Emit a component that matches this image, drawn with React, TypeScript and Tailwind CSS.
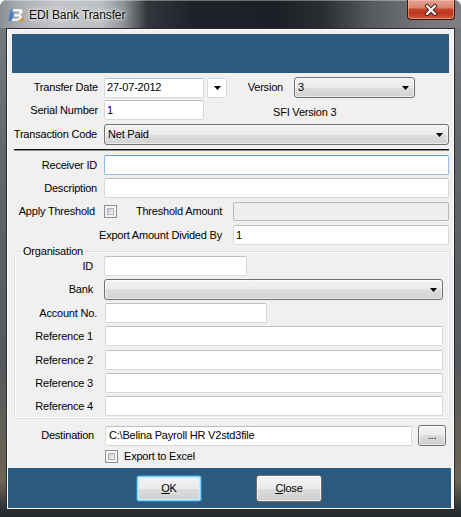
import React from "react";

function Arrow() {
  return (
    <svg width="7" height="4" viewBox="0 0 7 4" className="shrink-0">
      <polygon points="0,0 7,0 3.5,4" fill="#000" />
    </svg>
  );
}

function TextBox({
  className = "",
  value = "",
  focused = false,
  disabled = false,
}: {
  className?: string;
  value?: string;
  focused?: boolean;
  disabled?: boolean;
}) {
  const look = focused
    ? "border-[#8fbde8] border-t-[#5f9cd6] bg-white"
    : disabled
    ? "border-[#b4b8bc] bg-[#eeeeee]"
    : "border-[#d6dadf] border-t-[#bcc0c6] bg-white";
  return (
    <div
      className={`${className} ${look} border rounded-[2px] flex items-center pl-[2px] leading-[13px] whitespace-nowrap overflow-hidden`}
    >
      {value}
    </div>
  );
}

function Combo({ className = "", value = "" }: { className?: string; value?: string }) {
  return (
    <div
      className={`${className} h-[21px] flex items-center rounded-[3px] border border-[#707070] bg-[linear-gradient(180deg,#f3f3f3_0%,#ebebeb_50%,#dedede_50%,#d2d2d2_100%)] shadow-[inset_0_0_0_1px_rgba(255,255,255,0.55)] pl-[3px] pr-[5px]`}
    >
      <span className="flex-1 leading-[13px]">{value}</span>
      <Arrow />
    </div>
  );
}

function CheckBox() {
  return (
    <div className="w-[13px] h-[13px] border border-[#8e8f8f] bg-[#f4f4f4] p-[2px] shrink-0">
      <div className="w-full h-full border border-[#aeb2b7] bg-[linear-gradient(135deg,#c9cdd2_0%,#e3e5e8_60%,#f4f4f4_100%)]" />
    </div>
  );
}

function Label({ className = "", children }: { className?: string; children: React.ReactNode }) {
  return <span className={`${className} text-right whitespace-nowrap leading-[13px] shrink-0`}>{children}</span>;
}

function Logo() {
  return (
    <svg width="16" height="16" viewBox="0 0 16 16">
      <defs>
        <linearGradient id="lg1" x1="0" y1="0" x2="1" y2="1">
          <stop offset="0" stopColor="#6fa6dc" />
          <stop offset="1" stopColor="#1f5a9c" />
        </linearGradient>
      </defs>
      <path d="M2 2 L6 2 L4 14 L0.5 14 Z" fill="url(#lg1)" />
      <path d="M5 2 L12 2 Q15 2 14.5 5 Q14.2 7.2 12 7.8 Q14.5 8.4 14 11 Q13.5 14 10 14 L3.5 14 L4.2 11.6 L9.6 11.6 Q11 11.6 11.1 10.6 Q11.2 9.4 9.8 9.4 L6 9.4 L6.4 7 L10 7 Q11.3 7 11.4 5.8 Q11.5 4.6 10.2 4.6 L4.6 4.6 Z" fill="#ffffff" stroke="#9fb6cc" strokeWidth="0.4" />
      <path d="M9.5 14 L15.5 14 L15.5 10 Z" fill="#ef8a25" />
    </svg>
  );
}

function CloseButton() {
  return (
    <div className="mr-[6px] w-[48px] h-[20px] rounded-b-[4px] border border-t-0 border-[#3c1712] bg-[linear-gradient(180deg,#e6a291_0%,#d88470_40%,#c4442a_50%,#b9361d_70%,#d0603f_100%)] shadow-[inset_0_0_0_1px_rgba(255,210,190,0.45)] flex items-center justify-center">
      <svg width="14" height="12" viewBox="0 0 14 12">
        <path d="M3 2 L11 10 M11 2 L3 10" stroke="#4a1a12" strokeWidth="4.2" strokeLinecap="round" />
        <path d="M3 2 L11 10 M11 2 L3 10" stroke="#ffffff" strokeWidth="2.4" strokeLinecap="round" />
      </svg>
    </div>
  );
}

const btnLook =
  "rounded-[3px] border border-[#707070] bg-[linear-gradient(180deg,#f3f3f3_0%,#ebebeb_50%,#dddddd_50%,#cfcfcf_100%)] shadow-[inset_0_0_0_1px_rgba(255,255,255,0.6)] flex items-center justify-center leading-[13px]";

export default function App() {
  return (
    <div className="w-[461px] h-[517px] flex flex-col overflow-hidden rounded-t-[7px] bg-[linear-gradient(180deg,#7a7d81_0%,#63666a_30%,#55585c_70%,#6c6553_93%,#2c2f33_98.6%,#25282c_100%)] font-['Liberation_Sans',Arial,sans-serif] text-[11px] tracking-[-0.2px] text-black">
      {/* title bar */}
      <div className="h-[28px] shrink-0 flex items-start bg-[linear-gradient(90deg,#8b8f93_0%,#a9acaf_4%,#c3c5c8_12%,#bdc0c3_22%,#8c8f93_27%,#32363c_32%,#1f2228_42%,#1c1f25_60%,#2a2d32_70%,#55585c_80%,#75777a_92%,#7d7f82_100%)] shadow-[inset_0_1px_0_rgba(255,255,255,0.35)]">
        <div className="mt-[7px] ml-[8px]">
          <Logo />
        </div>
        <div className="ml-[5px] mt-[7px] text-[12px] tracking-[-0.1px] leading-[16px] text-[#0b0b0b] [text-shadow:0_0_6px_#ffffff,0_0_3px_#ffffff]">
          EDI Bank Transfer
        </div>
        <div className="flex-1" />
        <CloseButton />
      </div>

      {/* frame + client */}
      <div className="flex-1 flex px-[6px] pb-[7px]">
        <div className="flex-1 flex border border-[#25282c]">
          <div className="flex-1 flex flex-col border border-white bg-[#f0f0f0]">
            {/* header band */}
            <div className="mt-[4px] mx-[4px] h-[39px] bg-[#2b5a7e] shrink-0" />

            {/* row 1 */}
            <div className="mt-[4px] h-[21px] flex items-center">
              <Label className="w-[90px]">Transfer Date</Label>
              <TextBox className="ml-[6px] w-[100px] h-[20px]" value="27-07-2012" />
              <div className="ml-[3px] w-[20px] h-[20px] border border-[#d6dadf] bg-white rounded-[2px] flex items-center justify-center">
                <Arrow />
              </div>
              <Label className="w-[56px]">Version</Label>
              <Combo className="ml-[11px] w-[121px]" value="3" />
            </div>

            {/* row 2 */}
            <div className="mt-[2px] h-[20px] flex items-center">
              <Label className="w-[90px]">Serial Number</Label>
              <TextBox className="ml-[6px] w-[100px] h-[20px]" value="1" />
              <span className="ml-[69px] mt-[5px] leading-[13px]">SFI Version 3</span>
            </div>

            {/* row 3 */}
            <div className="mt-[4px] h-[21px] flex items-center">
              <Label className="w-[89px]">Transaction Code</Label>
              <Combo className="ml-[7px] w-[345px]" value="Net Paid" />
            </div>

            {/* separator */}
            <div className="mt-[4px] ml-[6px] w-[435px] h-[2px] border-t border-b border-t-[#111111] border-b-[#8a8a8a] shrink-0" />

            {/* receiver */}
            <div className="mt-[4px] h-[20px] flex items-center">
              <Label className="w-[89px]">Receiver ID</Label>
              <TextBox className="ml-[7px] w-[345px] h-[20px]" focused />
            </div>

            {/* description */}
            <div className="mt-[3px] h-[20px] flex items-center">
              <Label className="w-[89px]">Description</Label>
              <TextBox className="ml-[7px] w-[345px] h-[20px]" />
            </div>

            {/* threshold */}
            <div className="mt-[4px] h-[19px] flex items-center">
              <Label className="w-[87px]">Apply Threshold</Label>
              <div className="ml-[9px]">
                <CheckBox />
              </div>
              <Label className="w-[105px]">Threshold Amount</Label>
              <TextBox className="ml-[11px] w-[216px] h-[19px]" disabled />
            </div>

            {/* export divided */}
            <div className="mt-[4px] h-[20px] flex items-center">
              <Label className="w-[214px]">Export Amount Divided By</Label>
              <TextBox className="ml-[11px] w-[216px] h-[20px]" value="1" />
            </div>

            {/* organisation group */}
            <fieldset className="ml-[6px] w-[436px] border border-[#d5dfe5] rounded-[3px] px-0 pb-[2px] m-0 shadow-[inset_0_0_0_1px_#ffffff] shrink-0">
              <legend className="ml-[7px] px-[1px] leading-[13px]">Organisation</legend>
              <div className="-mt-[2px] h-[20px] flex items-center">
                <Label className="w-[78px]">ID</Label>
                <TextBox className="ml-[11px] w-[143px] h-[20px]" />
              </div>
              <div className="mt-[3px] h-[21px] flex items-center">
                <Label className="w-[78px]">Bank</Label>
                <Combo className="ml-[11px] w-[339px]" />
              </div>
              <div className="mt-[3px] h-[20px] flex items-center">
                <Label className="w-[82px]">Account No.</Label>
                <TextBox className="ml-[8px] w-[162px] h-[20px]" />
              </div>
              <div className="mt-[3px] h-[20px] flex items-center">
                <Label className="w-[78px]">Reference 1</Label>
                <TextBox className="ml-[12px] w-[338px] h-[20px]" />
              </div>
              <div className="mt-[4px] h-[20px] flex items-center">
                <Label className="w-[78px]">Reference 2</Label>
                <TextBox className="ml-[12px] w-[338px] h-[20px]" />
              </div>
              <div className="mt-[3px] h-[20px] flex items-center">
                <Label className="w-[78px]">Reference 3</Label>
                <TextBox className="ml-[12px] w-[338px] h-[20px]" />
              </div>
              <div className="mt-[3px] h-[20px] flex items-center">
                <Label className="w-[78px]">Reference 4</Label>
                <TextBox className="ml-[12px] w-[338px] h-[20px]" />
              </div>
            </fieldset>

            {/* destination */}
            <div className="mt-[6px] h-[21px] flex items-center">
              <Label className="w-[86px]">Destination</Label>
              <TextBox className="ml-[11px] w-[307px] h-[20px] pl-[3px]" value="C:\Belina Payroll HR V2std3file" />
              <div className={`ml-[6px] w-[28px] h-[21px] ${btnLook}`}>...</div>
            </div>

            {/* export to excel */}
            <div className="mt-[4px] h-[13px] flex items-center">
              <div className="ml-[97px]">
                <CheckBox />
              </div>
              <span className="ml-[6px] leading-[13px]">Export to Excel</span>
            </div>

            {/* footer */}
            <div className="mt-auto mr-[2px] h-[40px] bg-[#2b5a7e] flex items-center shrink-0">
              <div className={`ml-[128px] w-[66px] h-[27px] ${btnLook} !border-[#3c7fb1] !shadow-[inset_0_0_0_1px_#6fd3f7,inset_0_0_0_2px_#c9ecfa]`}>
                <span>
                  <span className="underline">O</span>K
                </span>
              </div>
              <div className={`ml-[54px] w-[66px] h-[27px] ${btnLook}`}>
                <span>
                  <span className="underline">C</span>lose
                </span>
              </div>
            </div>
          </div>
        </div>
      </div>
    </div>
  );
}
